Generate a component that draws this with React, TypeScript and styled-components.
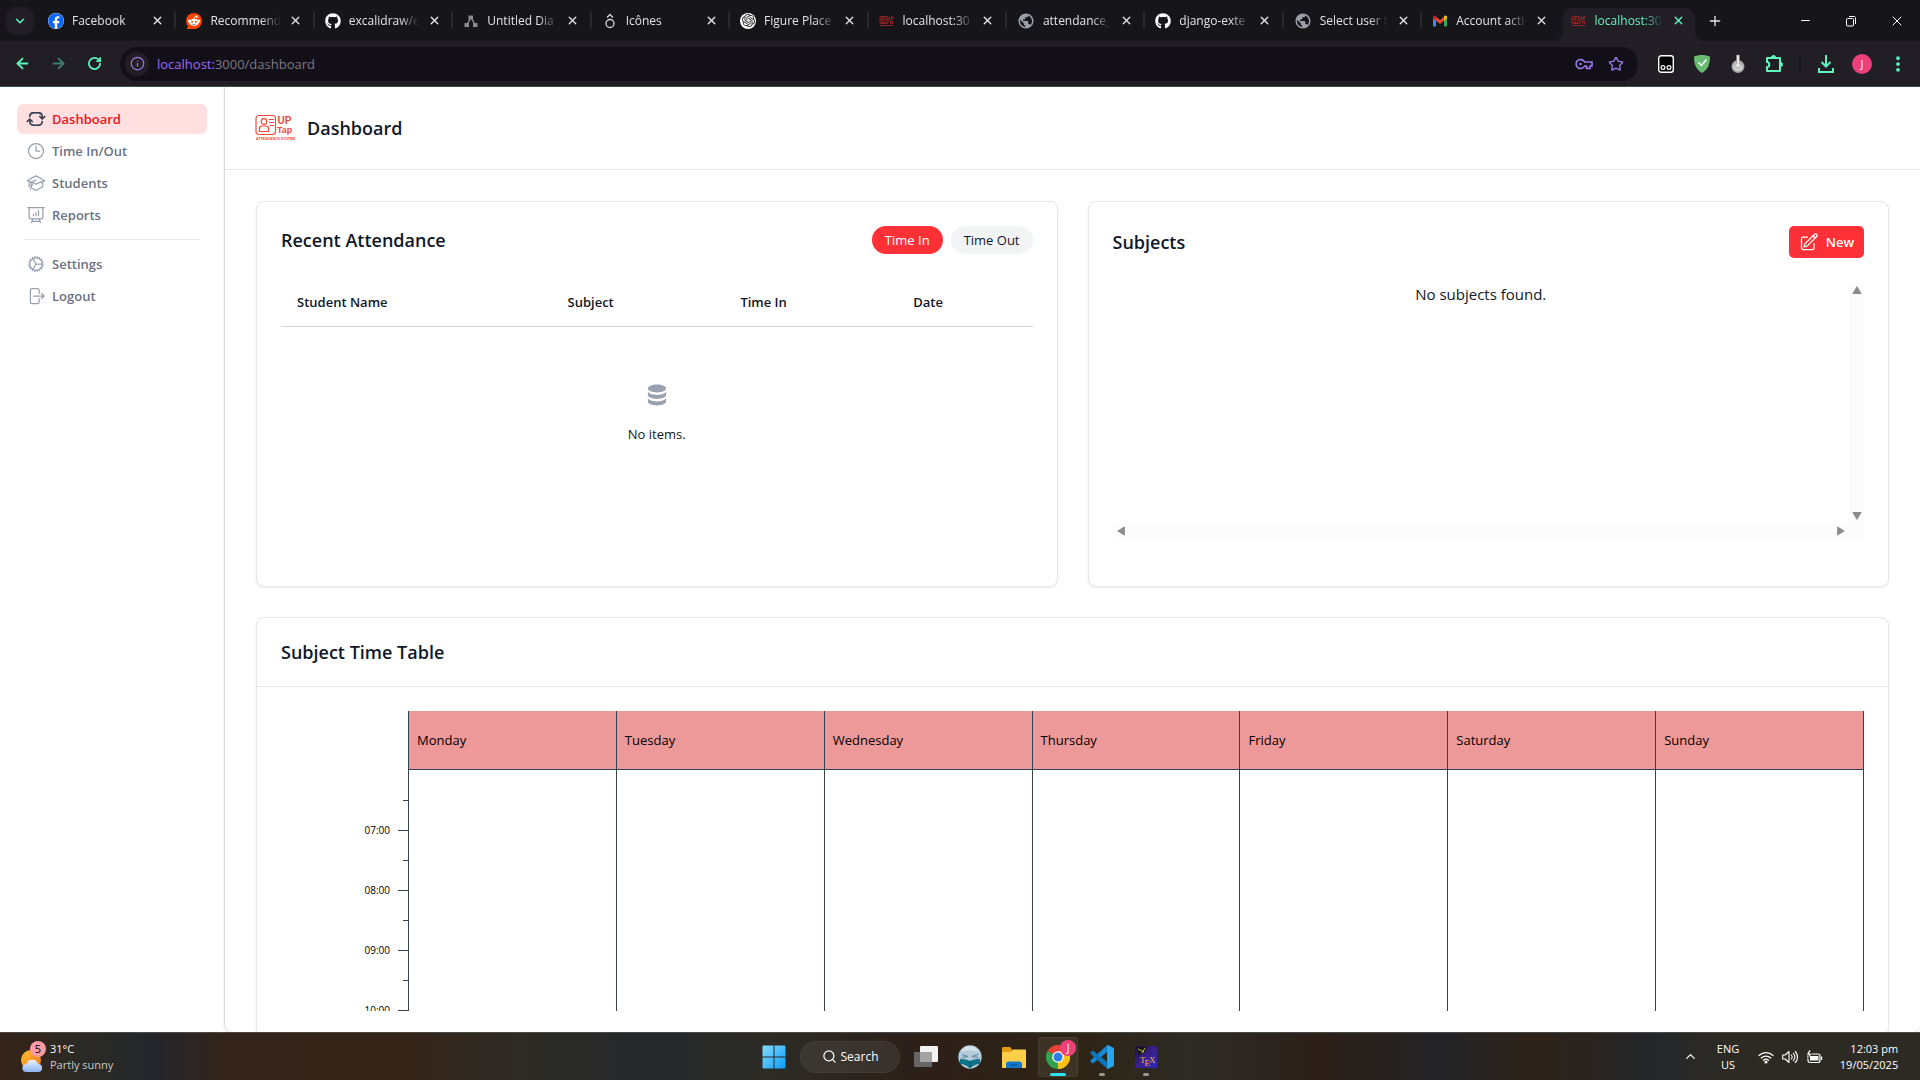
import React from 'react';
import styled, { createGlobalStyle, css } from 'styled-components';
import {
  ArrowLeft, ArrowRight, ChevronDown, ChevronUp, Info, Minus, MoreVertical, Plus, RotateCw, Search, Star, X,
} from 'lucide-react';
import { FaFacebook, FaGithub } from 'react-icons/fa';
import { HiDatabase } from 'react-icons/hi';
import { MdPublic } from 'react-icons/md';
import { SiOpenai } from 'react-icons/si';
import {
  HiOutlineAcademicCap, HiOutlineArrowPathRoundedSquare, HiOutlineArrowRightOnRectangle,
  HiOutlineClock, HiOutlineCog, HiOutlinePencilSquare, HiOutlinePresentationChartBar,
} from 'react-icons/hi2';

const mint = '#5ff5bd';
const violet = '#9d7ae6';
const line = '#e5e7eb';
const ink = '#101828';
const red = '#ff3136';
const axis = '#364153';

const GlobalStyle = createGlobalStyle`
  *, *::before, *::after { box-sizing: border-box; }
  body { margin: 0; font-family: "Segoe UI", "Open Sans", "Noto Sans", sans-serif; color: ${ink}; }
  button { font: inherit; color: inherit; border: 0; padding: 0; background: none; cursor: pointer; }
  a { color: inherit; text-decoration: none; }
  h1, h2 { margin: 0; }
  svg { display: block; flex: none; }
`;

const Screen = styled.div`
  height: 100vh;
  display: flex;
  flex-direction: column;
  overflow: hidden;
  background: #fff;
`;

/* ---------- browser window ---------- */

const TabStrip = styled.div`
  display: flex;
  align-items: flex-end;
  height: 41px;
  flex: none;
  background: #16151a;
`;

const TabSearch = styled.button`
  display: grid;
  place-items: center;
  width: 28px;
  height: 28px;
  margin: 0 4px 0 6px;
  align-self: center;
  border-radius: 10px;
  background: #211e26;
  color: ${mint};
`;

const TabList = styled.div`
  display: grid;
  grid-auto-flow: column;
  grid-auto-columns: minmax(0, 1fr);
  flex: 1;
  min-width: 0;
`;

const Tab = styled.div<{ $active?: boolean; $divider: boolean }>`
  position: relative;
  display: flex;
  align-items: center;
  min-width: 0;
  height: 33px;
  padding: 0 12px 8px 10px;
  gap: 8px;
  color: #e3e3e6;
  ${(p) => p.$divider && css`
    &::after {
      content: '';
      position: absolute;
      right: 0;
      top: 4px;
      width: 2px;
      height: 16px;
      background: #29282e;
    }
  `}
  ${(p) => p.$active && css`
    color: ${mint};
    background: #211e26;
    border-radius: 10px 10px 0 0;
    margin: 0 4px 0 2px;
    padding: 0 10px 8px 8px;
    &::before {
      content: '';
      position: absolute;
      left: -10px;
      right: -10px;
      bottom: 0;
      height: 10px;
      background:
        radial-gradient(circle at 0 0, transparent 10px, #211e26 10px) left / 10px 10px no-repeat,
        radial-gradient(circle at 100% 0, transparent 10px, #211e26 10px) right / 10px 10px no-repeat;
    }
  `}
`;

const TabTitle = styled.span`
  flex: 1;
  min-width: 0;
  overflow: hidden;
  white-space: nowrap;
  line-height: 16px;
  font-size: 12px;
  mask-image: linear-gradient(to right, #000 72%, transparent);
`;

const TabClose = styled.button`
  display: grid;
  place-items: center;
  width: 14px;
  height: 16px;
`;

const StripActions = styled.div`
  display: flex;
  align-items: center;
  align-self: center;
  width: 221px;
  color: #e3e3e6;
`;

const NewTab = styled.button`
  display: grid;
  place-items: center;
  width: 32px;
  height: 32px;
  margin-right: auto;
`;

const WindowButton = styled.button`
  display: grid;
  place-items: center;
  width: 46px;
  height: 32px;
  color: #fff;
`;

const Toolbar = styled.div`
  display: flex;
  align-items: center;
  height: 46px;
  flex: none;
  padding: 0 4px;
  background: #211e26;
  border-bottom: 1px solid #35564d;
`;

const ToolButton = styled.button<{ $dim?: boolean }>`
  display: grid;
  place-items: center;
  width: 36px;
  height: 34px;
  color: ${mint};
  opacity: ${(p) => (p.$dim ? 0.45 : 1)};
`;

const AddressBar = styled.div`
  display: flex;
  align-items: center;
  flex: 1;
  height: 34px;
  margin: 0 10px 0 8px;
  padding: 0 6px 0 5px;
  border-radius: 17px;
  background: #120f19;
  color: ${violet};
`;

const SiteInfo = styled.button`
  display: grid;
  place-items: center;
  width: 24px;
  height: 24px;
  margin-right: 8px;
  border-radius: 50%;
  background: #211e26;
`;

const Url = styled.span`
  flex: 1;
  font-size: 13px;
  line-height: 20px;
  color: #7d7a84;
  b { font-weight: 400; color: #9e6bff; }
`;

const BarButton = styled.button`
  display: grid;
  place-items: center;
  width: 32px;
  height: 28px;
`;

const BarDivider = styled.span`
  width: 2px;
  height: 18px;
  margin: 0 7px;
  background: #16151a;
`;

const Avatar = styled.span`
  display: grid;
  place-items: center;
  width: 20px;
  height: 20px;
  border-radius: 50%;
  background: #ec407a;
  color: #fff;
  font-size: 11px;
  line-height: 20px;
`;

/* ---------- application ---------- */

const Page = styled.div`
  display: flex;
  flex: 1;
  min-height: 0;
  background: #fff;
`;

const Sidebar = styled.nav`
  width: 224px;
  flex: none;
  padding: 17px 17px 0;
`;

const NavGroup = styled.div`
  display: flex;
  flex-direction: column;
  gap: 2px;
`;

const NavItem = styled.a<{ $active?: boolean }>`
  display: flex;
  align-items: center;
  gap: 6px;
  height: 30px;
  padding: 0 9px;
  border-radius: 6px;
  font-size: 13px;
  font-weight: 600;
  line-height: 20px;
  color: ${(p) => (p.$active ? '#f0141e' : '#6a7282')};
  background: ${(p) => (p.$active ? '#ffdfe0' : 'transparent')};
  svg { color: ${(p) => (p.$active ? '#364153' : '#99a1af')}; stroke-width: ${(p) => (p.$active ? 2 : 1.5)}; }
`;

const NavRule = styled.hr`
  height: 1px;
  margin: 9px 7px;
  border: 0;
  background: ${line};
`;

const Main = styled.main`
  flex: 1;
  min-width: 0;
  overflow: hidden;
  border-left: 1px solid #d9dbe1;
  border-radius: 0 0 8px 8px;
  box-shadow: 0 1px 3px rgba(0, 0, 0, 0.1);
`;

const PageHeader = styled.header`
  display: flex;
  align-items: center;
  gap: 12px;
  height: 83px;
  padding: 0 30px;
  border-bottom: 1px solid ${line};
`;

const PageTitle = styled.h1`
  font-size: 18px;
  line-height: 28px;
  font-weight: 600;
`;

const Content = styled.div`
  display: grid;
  grid-template-columns: repeat(2, minmax(0, 1fr));
  gap: 30px;
  padding: 31px;
`;

const Card = styled.section<{ $wide?: boolean }>`
  border: 1px solid ${line};
  border-radius: 8px;
  background: #fff;
  box-shadow: 0 1px 2px rgba(0, 0, 0, 0.08);
  padding: ${(p) => (p.$wide ? '0' : '24px')};
  grid-column: ${(p) => (p.$wide ? '1 / -1' : 'auto')};
`;

const CardHeader = styled.div<{ $ruled?: boolean }>`
  display: flex;
  align-items: center;
  justify-content: space-between;
  ${(p) => p.$ruled && css`
    height: 69px;
    padding: 0 24px;
    border-bottom: 1px solid ${line};
  `}
`;

const CardTitle = styled.h2`
  font-size: 18px;
  line-height: 28px;
  font-weight: 600;
`;

const PillGroup = styled.div`
  display: flex;
  gap: 8px;
`;

const Pill = styled.button<{ $on?: boolean }>`
  height: 28px;
  padding: 0 13px;
  border-radius: 14px;
  font-size: 13px;
  line-height: 20px;
  color: ${(p) => (p.$on ? '#fff' : ink)};
  background: ${(p) => (p.$on ? red : '#f3f4f6')};
`;

const AttendanceTable = styled.table`
  width: 100%;
  margin-top: 24px;
  table-layout: fixed;
  border-collapse: separate;
  border-spacing: 0;
  font-size: 13px;
  line-height: 20px;
`;

const HeadCell = styled.th<{ $share: number }>`
  width: ${(p) => p.$share}%;
  height: 49px;
  padding: 0 16px;
  text-align: left;
  font-weight: 600;
  border-bottom: 1px solid #d1d5db;
`;

const EmptyCell = styled.td`
  padding: 55px 16px 0;
  text-align: center;
  svg { margin: 0 auto 16px; color: #99a1af; }
`;

const NewButton = styled.button`
  display: flex;
  align-items: center;
  gap: 7px;
  height: 32px;
  padding: 0 10px;
  border-radius: 5px;
  background: ${red};
  color: #fff;
  font-size: 13px;
  font-weight: 600;
  line-height: 20px;
`;

const ScrollFrame = styled.div`
  display: grid;
  grid-template-columns: minmax(0, 1fr) 15px;
  grid-template-rows: 241px 15px;
  margin: 24px 0;
`;

const ScrollBody = styled.div`
  text-align: center;
  font-size: 15px;
  line-height: 24px;
`;

const ScrollTrack = styled.div<{ $vertical?: boolean }>`
  display: flex;
  flex-direction: ${(p) => (p.$vertical ? 'column' : 'row')};
  justify-content: space-between;
  background: #fcfcfc;
`;

const ScrollArrow = styled.button`
  display: grid;
  place-items: center;
  width: 16px;
  height: 15px;
`;

const Timetable = styled.div`
  display: grid;
  grid-template-columns: 127px minmax(0, 1fr);
  height: 300px;
  margin: 24px;
  overflow: hidden;
`;

const TimeAxis = styled.div`
  padding-top: 74px;
`;

const TimeSlot = styled.div<{ $half?: boolean }>`
  display: flex;
  align-items: center;
  justify-content: flex-end;
  gap: 8px;
  height: 30px;
  font-size: 10px;
  line-height: 14px;
  color: #000;
  &::after {
    content: '';
    width: ${(p) => (p.$half ? 5 : 10)}px;
    height: 1px;
    background: ${axis};
  }
`;

const Days = styled.div`
  display: grid;
  grid-template-columns: repeat(7, minmax(0, 1fr));
  border-left: 1px solid ${axis};
`;

const Day = styled.div`
  border-right: 1px solid ${axis};
`;

const DayName = styled.div`
  height: 59px;
  padding: 0 8px;
  border-bottom: 1px solid ${axis};
  background: #ee9999;
  color: #000;
  font-size: 13px;
  line-height: 58px;
`;

/* ---------- desktop taskbar ---------- */

const Taskbar = styled.footer`
  display: grid;
  grid-template-columns: 1fr auto 1fr;
  align-items: center;
  height: 48px;
  flex: none;
  border-top: 1px solid #4a4946;
  background: linear-gradient(to right,
    #352318 0, #2b2a25 4%, #24262b 8%, #342318 12%, #352318 21%, #2c2b25 27%, #25272a 34%, #2c2b25 40%,
    #2c2019 48%, #2f2415 56%, #2c2b25 62%, #2c2019 69%, #232427 75%, #2e2319 80%, #24262a 86%, #2c2a23 90%, #2c2a23 100%);
  color: #fff;
  font-size: 12px;
  line-height: 16px;
`;

const Weather = styled.button`
  display: flex;
  align-items: center;
  gap: 8px;
  padding-left: 20px;
  text-align: left;
  justify-self: start;
`;

const WeatherIcon = styled.span`
  position: relative;
  width: 22px;
  height: 32px;
  display: grid;
  place-items: end center;
`;

const Badge = styled.span`
  position: absolute;
  top: 0;
  left: 10px;
  width: 16px;
  height: 16px;
  border-radius: 50%;
  background: #ff99a4;
  color: #000;
  text-align: center;
  font-size: 11px;
  line-height: 16px;
`;

const Lines = styled.span<{ $align?: string }>`
  display: flex;
  flex-direction: column;
  font-size: 11px;
  text-align: ${(p) => p.$align || 'left'};
  small { font-size: 11px; color: #c9c8c6; }
`;

const Dock = styled.div`
  display: flex;
  align-items: center;
  gap: 4px;
`;

const SearchPill = styled.button`
  display: flex;
  align-items: center;
  justify-content: center;
  gap: 4px;
  width: 100px;
  height: 32px;
  margin: 0 2px;
  border-radius: 16px;
  background: rgba(255, 255, 255, 0.07);
  border: 1px solid rgba(255, 255, 255, 0.04);
`;

const DockItem = styled.button<{ $state?: 'active' | 'open' }>`
  position: relative;
  display: grid;
  place-items: center;
  width: 40px;
  height: 40px;
  border-radius: 4px;
  ${(p) => p.$state === 'active' && css`
    background: rgba(255, 255, 255, 0.07);
    box-shadow: inset 0 0 0 1px rgba(255, 255, 255, 0.06);
  `}
  ${(p) => p.$state && css`
    &::after {
      content: '';
      position: absolute;
      bottom: 1px;
      width: ${p.$state === 'active' ? 16 : 6}px;
      height: 3px;
      border-radius: 2px;
      background: ${p.$state === 'active' ? '#2de2f5' : '#9c9996'};
    }
  `}
`;

const ProfileBadge = styled(Badge)`
  top: 3px;
  left: 22px;
  background: #ec407a;
  color: #fff;
  font-size: 10px;
`;

const Tray = styled.div`
  display: flex;
  align-items: center;
  justify-self: end;
  padding-right: 19px;
`;

const TrayButton = styled.button<{ $width: number }>`
  display: grid;
  place-items: center;
  width: ${(p) => p.$width}px;
  height: 40px;
`;

const TrayStatus = styled.button`
  display: flex;
  align-items: center;
  gap: 8px;
  margin: 0 14px 0 8px;
`;

/* ---------- drawings ---------- */

const RedditMark = () => (
  <svg width="16" height="16" viewBox="0 0 16 16">
    <circle cx="8" cy="8" r="8" fill="#ff4500" />
    <path d="M.5 16 3 12l5 4Z" fill="#ff4500" />
    <circle cx="3.400" cy="8" r="1.500" fill="#fff" /><circle cx="12.600" cy="8" r="1.500" fill="#fff" />
    <ellipse cx="8" cy="9.300" rx="4.800" ry="3.600" fill="#fff" />
    <circle cx="10.600" cy="3.600" r="1.200" fill="#fff" />
    <path d="M8 6c0-1.600.700-2.400 2-2.500" stroke="#fff" fill="none" strokeWidth=".8" />
    <circle cx="6.100" cy="8.700" r="1" fill="#ff4500" /><circle cx="9.900" cy="8.700" r="1" fill="#ff4500" />
    <path d="M6.300 11.200c1 .6 2.400.6 3.400 0" stroke="#444" fill="none" strokeWidth=".7" />
  </svg>
);

const DiagramMark = () => (
  <svg width="16" height="16" viewBox="0 0 16 16" fill="#8b8a8e" stroke="#8b8a8e">
    <path d="M8 4 4 12M8 4l4 8" fill="none" strokeWidth="1.500" />
    <rect x="5.500" y="2.500" width="4.500" height="4" stroke="none" />
    <rect x="1.500" y="10" width="4.500" height="4" stroke="none" />
    <rect x="10" y="10" width="4.500" height="4" stroke="none" />
  </svg>
);

const IconesMark = () => (
  <svg width="16" height="16" viewBox="0 0 16 16" fill="none" stroke="#d8d8da" strokeWidth="1.300">
    <circle cx="8" cy="10.500" r="4" /><path d="m5 4.500 3-3 3 3" />
  </svg>
);

const GmailMark = () => (
  <svg width="16" height="16" viewBox="0 0 16 16">
    <path d="M1 4.500v8c0 .6.4 1 1 1h2V7Z" fill="#4285f4" /><path d="M15 4.500v8c0 .6-.4 1-1 1h-2V7Z" fill="#34a853" />
    <path d="M4 3.800 8 7l4-3.200v4L8 11 4 7.800Z" fill="#ea4335" /><path d="M1 4c0-1.300 1.500-2 2.500-1.200L4 3.200v4.600L1 5.400Z" fill="#c5221f" />
    <path d="M15 4c0-1.300-1.500-2-2.500-1.200l-.5.400v4.600l3-2.400Z" fill="#fbbc04" />
  </svg>
);

const TapMark = () => (
  <svg width="16" height="16" viewBox="0 0 16 16" stroke="#8e2527" fill="none">
    <rect x="1" y="3.500" width="8" height="7" rx="1" fill="#4a181b" /><circle cx="4" cy="6" r="1" /><path d="M2.500 9.500h3M7 5.500h1.500M7 7.500h1.500M10.500 3.500v3h2v-3h1.500v3M10.500 8.500h4M11.500 8.500v2.500M13.500 9v2M1 12.500h13" />
  </svg>
);

const AppLogo = () => (
  <svg width="40" height="28" viewBox="0 0 40 28" fill="none" stroke="#ef4a3c">
    <rect x="1" y="1.500" width="19.500" height="19" rx="3" strokeWidth="1.200" />
    <circle cx="9" cy="7.500" r="2.800" strokeWidth="1.200" />
    <path d="M4.500 17.500v-3c0-1.500 1-2.500 2.500-2.500h4c1.500 0 2.500 1 2.500 2.500v3Z" strokeWidth="1.200" />
    <path d="M13.500 5.500H19M14 8.500h5M15 11.500h4" strokeWidth="1.200" />
    <g fill="#ef4a3c" stroke="none" fontFamily="Liberation Sans, sans-serif" fontWeight="700">
      <text x="22.500" y="9.500" fontSize="10">UP</text>
      <text x="22" y="19" fontSize="9">Tap</text>
      <text x="1" y="26" fontSize="3.500">ATTENDANCE SYSTEM</text>
    </g>
  </svg>
);

const RestoreMark = () => (
  <svg width="12" height="12" viewBox="0 0 12 12" fill="none" stroke="#fff">
    <rect x="1.500" y="3.500" width="7" height="7.500" rx="1" /><path d="M4 1.500h5c1 0 1.500.5 1.500 1.500v6" />
  </svg>
);

const MonkeyMark = () => (
  <svg width="16" height="20" viewBox="0 0 16 20">
    <rect x=".7" y="1.700" width="14.600" height="16.600" rx="2.500" fill="#000" stroke="#fff" strokeWidth="1.400" />
    <circle cx="5" cy="13.500" r="1.900" fill="none" stroke="#fff" strokeWidth="1.200" /><circle cx="11" cy="13.500" r="1.900" fill="none" stroke="#fff" strokeWidth="1.200" />
  </svg>
);

const ShieldMark = () => (
  <svg width="18" height="20" viewBox="0 0 18 20">
    <path d="M9 1c3 0 5.500.6 8 1.500C17 9 15.500 15.500 9 19 2.500 15.500 1 9 1 2.500 3.500 1.600 6 1 9 1Z" fill="#68bc71" />
    <path d="m5.500 8.500 3 3 5-6" fill="none" stroke="#fff" strokeWidth="1.500" />
  </svg>
);

const GrabMark = () => (
  <svg width="16" height="20" viewBox="0 0 16 20">
    <circle cx="8" cy="12.500" r="6.500" fill="#a2a2a2" /><circle cx="8" cy="12.500" r="5" fill="#cfcfcf" />
    <path d="M6.500 1h3v9H12l-4 4.500L4 10h2.500Z" fill="#e9e9e9" stroke="#777" strokeWidth=".5" />
  </svg>
);

const PuzzleMark = () => (
  <svg width="20" height="20" viewBox="0 0 20 20" fill="none" stroke={mint} strokeWidth="2">
    <path d="M3 4h13v13H3v-4c3 0 3-5 0-5Z" strokeLinejoin="round" />
    <path d="M7.500 3a2 1.500 0 0 1 4 0ZM17 8.500a1.500 2 0 0 1 0 4Z" fill={mint} strokeWidth="1" />
  </svg>
);

const DownloadMark = () => (
  <svg width="18" height="20" viewBox="0 0 18 20" fill="none" stroke={mint} strokeWidth="2">
    <path d="M9 1v11M4.500 8 9 12.500 13.500 8M2 14v4h14v-4" />
  </svg>
);

const KeyMark = () => (
  <svg width="18" height="14" viewBox="0 0 18 14" fill="none" stroke={violet} strokeWidth="1.600">
    <path d="M9.600 5H17v4h-2v2.500h-3.500V9H9.600A4.500 4.500 0 1 1 9.600 5Z" /><circle cx="5.500" cy="7" r="1.200" fill={violet} stroke="none" />
  </svg>
);

const SunCloud = () => (
  <svg width="24" height="24" viewBox="0 0 24 24">
    <defs>
      <linearGradient id="sun" x2="1" y2="1"><stop stopColor="#ffc02e" /><stop offset="1" stopColor="#f1781c" /></linearGradient>
      <linearGradient id="cloud" x2="0" y2="1"><stop stopColor="#e9f2ff" /><stop offset="1" stopColor="#8db4f4" /></linearGradient>
    </defs>
    <circle cx="11" cy="11" r="10" fill="url(#sun)" />
    <path d="M6.500 23a4 4 0 0 1-.2-8 6.200 6.200 0 0 1 11.800 0 4 4 0 0 1 0 8Z" fill="url(#cloud)" />
  </svg>
);

const StartMark = () => (
  <svg width="24" height="24" viewBox="0 0 24 24">
    <defs><linearGradient id="win" x2="1" y2="1"><stop stopColor="#86dcff" /><stop offset="1" stopColor="#0b9bf5" /></linearGradient></defs>
    <path d="M.5 1.500a1 1 0 0 1 1-1h10v11H.5ZM12.500.5h10a1 1 0 0 1 1 1v10h-11ZM.5 12.500h11v11h-10a1 1 0 0 1-1-1ZM12.500 12.500h11v10a1 1 0 0 1-1 1h-10Z" fill="url(#win)" />
  </svg>
);

const TaskViewMark = () => (
  <svg width="24" height="24" viewBox="0 0 24 24">
    <rect x="6" y="1" width="18" height="16" rx="1" fill="#f2f2f2" />
    <rect x="0" y="7" width="18" height="15" rx="1" fill="#666" />
    <path d="M6 7h12v10H6Z" fill="#a4a4a4" />
  </svg>
);

const ReaderMark = () => (
  <svg width="24" height="24" viewBox="0 0 24 24">
    <circle cx="12" cy="12" r="11.700" fill="#b3cbd9" />
    <path d="M3 7a10 10 0 0 1 18 0c-5-2-13-2-18 0Z" fill="#d5e1e9" />
    <path d="m4 9.500 6 2-6 1M20 9.500l-6 2 6 1" fill="none" stroke="#5b8199" />
    <path d="M2 14c4 0 7 .5 10 2 3-1.500 6-2 10-2v5c-4 0-7 1.500-10 4.500C9 20.500 6 19 2 19Z" fill="#0f7488" />
    <path d="M12 16v7" stroke="#0b5262" />
  </svg>
);

const FolderMark = () => (
  <svg width="24" height="24" viewBox="0 0 24 24">
    <path d="M0 3.500C0 2.500.700 2 1.500 2H8l2.500 3v4H0Z" fill="#e59b12" />
    <path d="M0 7h9l2-2.500h12c.6 0 1 .4 1 1V22c0 .6-.4 1-1 1H1c-.6 0-1-.4-1-1Z" fill="#ffcf4a" />
    <path d="M4 23v-4c0-1.500 1-2.500 2.500-2.500h11c1.500 0 2.500 1 2.500 2.500v4Z" fill="#1278cc" />
    <path d="M8.500 20h7" stroke="#0b4f91" strokeWidth="1.200" />
  </svg>
);

const ChromeMark = () => (
  <svg width="24" height="24" viewBox="0 0 24 24">
    <path d="M12 12 1.600 6A12 12 0 0 1 22.400 6Z" fill="#ea4335" />
    <path d="M12 12 22.400 6A12 12 0 0 1 12 24Z" fill="#fbc116" />
    <path d="M12 12V24A12 12 0 0 1 1.600 6Z" fill="#31a350" />
    <path d="M12 6.300h10.500A12 12 0 0 1 12 24l5-9Z" fill="#fbc116" />
    <circle cx="12" cy="12" r="5.800" fill="#fff" /><circle cx="12" cy="12" r="4.500" fill="#2f7de9" />
  </svg>
);

const CodeMark = () => (
  <svg width="24" height="24" viewBox="0 0 24 24">
    <path d="M17.500 0 24 3v18l-6.500 3Z" fill="#27a6ee" />
    <path d="M17.500 0v6.700L3 18.500.500 17v-1.700Z" fill="#1787d2" />
    <path d="M17.500 24v-6.700L3 5.500.500 7v1.700Z" fill="#0b74bd" />
    <path d="M17.500 0 19 .700v22.600l-1.500.7Z" fill="#35b2f3" />
  </svg>
);

const TexMark = () => (
  <svg width="22" height="22" viewBox="0 0 22 22">
    <defs><linearGradient id="tex" x2="1" y2="1"><stop stopColor="#1d1438" /><stop offset=".5" stopColor="#3b1f8c" /><stop offset="1" stopColor="#2a2ab8" /></linearGradient></defs>
    <rect width="22" height="22" rx="1" fill="url(#tex)" />
    <path d="M2 1h10l-3 6-6 2Z" fill="#161616" /><path d="m3 3 6 3M10 2l-3 5" stroke="#b6c93d" />
    <g fill="#f0b04a" fontFamily="Liberation Serif, serif" fontSize="9">
      <text x="5" y="17">T</text><text x="9.500" y="19.500">E</text><text x="14" y="17">X</text>
    </g>
  </svg>
);

const WifiMark = () => (
  <svg width="16" height="14" viewBox="0 0 16 14" fill="none" stroke="#fff" strokeWidth="1.200" strokeLinecap="round">
    <path d="M1 5.500a10 10 0 0 1 14 0M3.300 8a6.700 6.700 0 0 1 9.400 0M5.500 10.300a3.600 3.600 0 0 1 5 0" /><circle cx="8" cy="12" r="1" fill="#fff" />
  </svg>
);

const SoundMark = () => (
  <svg width="16" height="14" viewBox="0 0 16 14" fill="none" stroke="#fff" strokeWidth="1.100" strokeLinecap="round" strokeLinejoin="round">
    <path d="M.7 5v4h2.500L7 12.500v-11L3.200 5ZM9.300 5a3 3 0 0 1 0 4M11.300 3.300a5 5 0 0 1 0 7.400M13.300 1.500a8 8 0 0 1 0 11" />
  </svg>
);

const BatteryMark = () => (
  <svg width="17" height="14" viewBox="0 0 17 14">
    <rect x="2" y="4" width="12" height="8.500" rx="2" fill="none" stroke="#fff" strokeWidth="1.200" />
    <path d="M4 6h8.500v4.500H4ZM15 6.500h1.200v3.500H15Z" fill="#fff" />
    <path d="M3 0 .5 5H3L2 9l4-5.500H3.500L5 0Z" fill="#fff" stroke="#2c2a23" strokeWidth=".6" />
  </svg>
);

const Triangle = ({ turn }: { turn: number }) => (
  <svg width="10" height="10" viewBox="0 0 9 9"><path transform={`rotate(${turn} 4.500 4.500)`} d="M4.500 1 8.500 7.500Q8.500 8 8 8H1Q.5 8 .5 7.500Z" fill="#8b8b8b" /></svg>
);

const WhiteDisc = styled.span`
  display: grid;
  place-items: center;
  flex: none;
  width: 16px;
  height: 16px;
  border-radius: 50%;
  background: #fff;
`;

/* ---------- data ---------- */

const tabs = [
  { title: 'Facebook', icon: <WhiteDisc><FaFacebook size={16} color="#0866ff" /></WhiteDisc> },
  { title: 'Recommend', icon: <RedditMark /> },
  { title: 'excalidraw/e', icon: <FaGithub size={16} color="#fff" /> },
  { title: 'Untitled Dia', icon: <DiagramMark /> },
  { title: 'Icônes', icon: <IconesMark /> },
  { title: 'Figure Place', icon: <WhiteDisc><SiOpenai size={13} color="#222" /></WhiteDisc> },
  { title: 'localhost:30', icon: <TapMark /> },
  { title: 'attendance_', icon: <MdPublic size={18} color="#9aa0a6" /> },
  { title: 'django-exte', icon: <FaGithub size={16} color="#fff" /> },
  { title: 'Select user t', icon: <MdPublic size={18} color="#9aa0a6" /> },
  { title: 'Account acti', icon: <GmailMark /> },
  { title: 'localhost:30', icon: <TapMark />, active: true },
];

const primaryNav = [
  { label: 'Dashboard', Icon: HiOutlineArrowPathRoundedSquare, active: true },
  { label: 'Time In/Out', Icon: HiOutlineClock },
  { label: 'Students', Icon: HiOutlineAcademicCap },
  { label: 'Reports', Icon: HiOutlinePresentationChartBar },
];

const secondaryNav = [
  { label: 'Settings', Icon: HiOutlineCog },
  { label: 'Logout', Icon: HiOutlineArrowRightOnRectangle },
];

const columns = [
  { label: 'Student Name', share: 36 },
  { label: 'Subject', share: 23 },
  { label: 'Time In', share: 23 },
  { label: 'Date', share: 18 },
];

const days = ['Monday', 'Tuesday', 'Wednesday', 'Thursday', 'Friday', 'Saturday', 'Sunday'];
const slots = ['', '07:00', '', '08:00', '', '09:00', '', '10:00'];

function BrowserChrome() {
  return (
    <>
      <TabStrip>
        <TabSearch aria-label="Search tabs"><ChevronDown size={14} strokeWidth={2.5} /></TabSearch>
        <TabList>
          {tabs.map((tab, i) => (
            <Tab key={i} $active={tab.active} $divider={i < tabs.length - 2}>
              {tab.icon}
              <TabTitle>{tab.title}</TabTitle>
              <TabClose aria-label="Close tab"><X size={13} strokeWidth={2.5} /></TabClose>
            </Tab>
          ))}
        </TabList>
        <StripActions>
          <NewTab aria-label="New tab"><Plus size={16} /></NewTab>
          <WindowButton aria-label="Minimize"><Minus size={13} /></WindowButton>
          <WindowButton aria-label="Restore"><RestoreMark /></WindowButton>
          <WindowButton aria-label="Close"><X size={16} strokeWidth={1.5} /></WindowButton>
        </StripActions>
      </TabStrip>
      <Toolbar>
        <ToolButton aria-label="Back"><ArrowLeft size={17} strokeWidth={2.5} /></ToolButton>
        <ToolButton aria-label="Forward" $dim><ArrowRight size={17} strokeWidth={2.5} /></ToolButton>
        <ToolButton aria-label="Reload"><RotateCw size={15} strokeWidth={2.8} /></ToolButton>
        <AddressBar>
          <SiteInfo aria-label="Site information"><Info size={15} /></SiteInfo>
          <Url><b>localhost:</b>3000/dashboard</Url>
          <BarButton aria-label="Passwords"><KeyMark /></BarButton>
          <BarButton aria-label="Bookmark"><Star size={16} /></BarButton>
        </AddressBar>
        <ToolButton aria-label="Tampermonkey"><MonkeyMark /></ToolButton>
        <ToolButton aria-label="Ad blocker"><ShieldMark /></ToolButton>
        <ToolButton aria-label="Download manager"><GrabMark /></ToolButton>
        <ToolButton aria-label="Extensions"><PuzzleMark /></ToolButton>
        <BarDivider />
        <ToolButton aria-label="Downloads"><DownloadMark /></ToolButton>
        <ToolButton aria-label="Profile"><Avatar>J</Avatar></ToolButton>
        <ToolButton aria-label="Menu"><MoreVertical size={20} strokeWidth={2.5} /></ToolButton>
      </Toolbar>
    </>
  );
}

function RecentAttendance() {
  return (
    <Card>
      <CardHeader>
        <CardTitle>Recent Attendance</CardTitle>
        <PillGroup>
          <Pill $on>Time In</Pill>
          <Pill>Time Out</Pill>
        </PillGroup>
      </CardHeader>
      <AttendanceTable>
        <thead>
          <tr>{columns.map((c) => <HeadCell key={c.label} $share={c.share}>{c.label}</HeadCell>)}</tr>
        </thead>
        <tbody>
          <tr><EmptyCell colSpan={4}><HiDatabase size={26} />No items.</EmptyCell></tr>
        </tbody>
      </AttendanceTable>
    </Card>
  );
}

function Subjects() {
  return (
    <Card>
      <CardHeader>
        <CardTitle>Subjects</CardTitle>
        <NewButton><HiOutlinePencilSquare size={20} />New</NewButton>
      </CardHeader>
      <ScrollFrame>
        <ScrollBody>No subjects found.</ScrollBody>
        <ScrollTrack $vertical>
          <ScrollArrow aria-label="Scroll up"><Triangle turn={0} /></ScrollArrow>
          <ScrollArrow aria-label="Scroll down"><Triangle turn={180} /></ScrollArrow>
        </ScrollTrack>
        <ScrollTrack>
          <ScrollArrow aria-label="Scroll left"><Triangle turn={-90} /></ScrollArrow>
          <ScrollArrow aria-label="Scroll right"><Triangle turn={90} /></ScrollArrow>
        </ScrollTrack>
        <ScrollTrack />
      </ScrollFrame>
    </Card>
  );
}

function SubjectTimetable() {
  return (
    <Card $wide>
      <CardHeader $ruled><CardTitle>Subject Time Table</CardTitle></CardHeader>
      <Timetable>
        <TimeAxis>
          {slots.map((s, i) => <TimeSlot key={i} $half={!s}>{s}</TimeSlot>)}
        </TimeAxis>
        <Days>
          {days.map((d) => <Day key={d}><DayName>{d}</DayName></Day>)}
        </Days>
      </Timetable>
    </Card>
  );
}

function DesktopTaskbar() {
  return (
    <Taskbar>
      <Weather>
        <WeatherIcon><SunCloud /><Badge>5</Badge></WeatherIcon>
        <Lines><span>31°C</span><small>Partly sunny</small></Lines>
      </Weather>
      <Dock>
        <DockItem aria-label="Start"><StartMark /></DockItem>
        <SearchPill><Search size={15} />Search</SearchPill>
        <DockItem aria-label="Task view"><TaskViewMark /></DockItem>
        <DockItem aria-label="Reader"><ReaderMark /></DockItem>
        <DockItem aria-label="File Explorer"><FolderMark /></DockItem>
        <DockItem aria-label="Chrome" $state="active"><ChromeMark /><ProfileBadge>J</ProfileBadge></DockItem>
        <DockItem aria-label="Visual Studio Code" $state="open"><CodeMark /></DockItem>
        <DockItem aria-label="TeX editor" $state="open"><TexMark /></DockItem>
      </Dock>
      <Tray>
        <TrayButton $width={32} aria-label="Hidden icons"><ChevronUp size={15} /></TrayButton>
        <TrayButton $width={44}><Lines $align="center"><span>ENG</span><span>US</span></Lines></TrayButton>
        <TrayStatus aria-label="Network, sound, battery"><WifiMark /><SoundMark /><BatteryMark /></TrayStatus>
        <TrayButton $width={64}><Lines $align="right"><span>12:03 pm</span><span>19/05/2025</span></Lines></TrayButton>
      </Tray>
    </Taskbar>
  );
}

export default function App() {
  return (
    <Screen>
      <GlobalStyle />
      <BrowserChrome />
      <Page>
        <Sidebar>
          <NavGroup>
            {primaryNav.map(({ label, Icon, active }) => (
              <NavItem key={label} href="#" $active={active}><Icon size={20} />{label}</NavItem>
            ))}
          </NavGroup>
          <NavRule />
          <NavGroup>
            {secondaryNav.map(({ label, Icon }) => (
              <NavItem key={label} href="#"><Icon size={20} />{label}</NavItem>
            ))}
          </NavGroup>
        </Sidebar>
        <Main>
          <PageHeader><AppLogo /><PageTitle>Dashboard</PageTitle></PageHeader>
          <Content>
            <RecentAttendance />
            <Subjects />
            <SubjectTimetable />
          </Content>
        </Main>
      </Page>
      <DesktopTaskbar />
    </Screen>
  );
}
